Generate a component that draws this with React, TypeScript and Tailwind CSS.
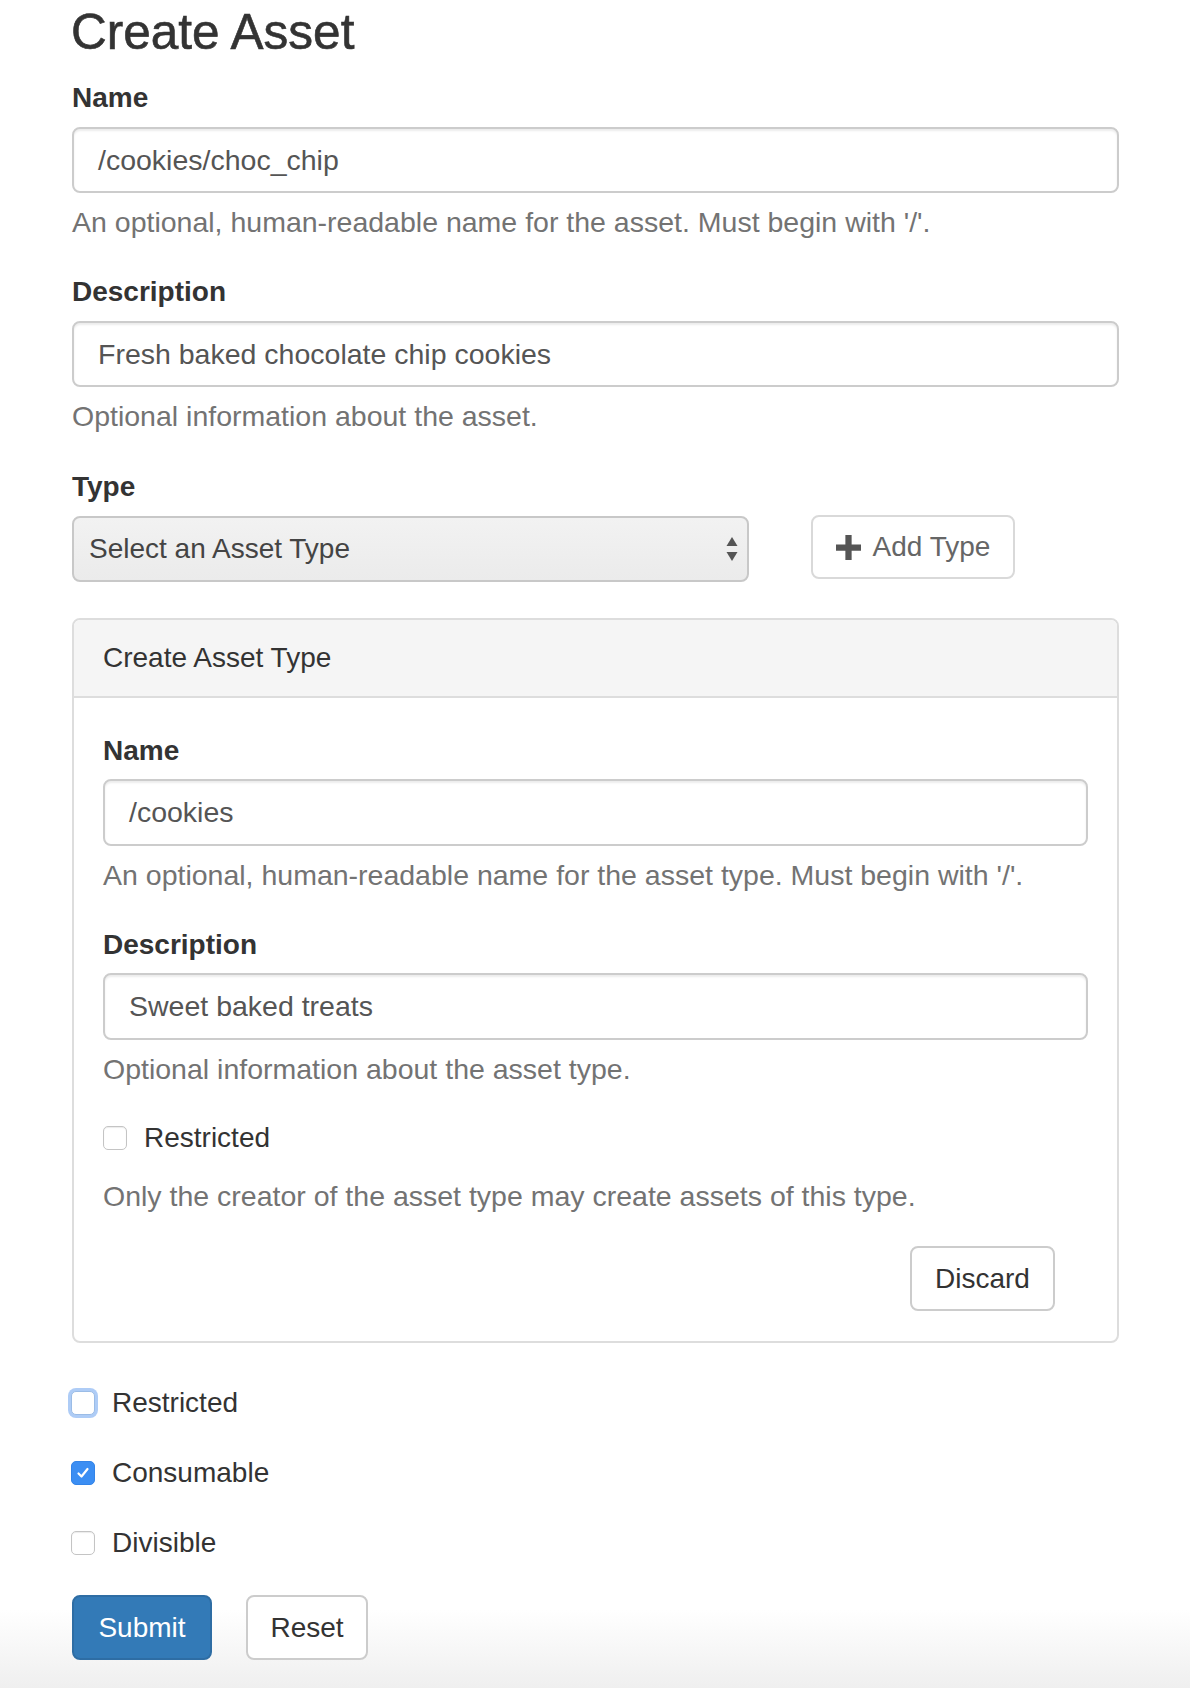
import React from "react";

const font = { fontFamily: '"Liberation Sans", Arial, Helvetica, sans-serif' };

function Label({ children }: { children: React.ReactNode }) {
  return <div className="text-[28px] leading-[40px] font-bold text-[#333]">{children}</div>;
}

function TextInput({ value, tall }: { value: string; tall?: boolean }) {
  return (
    <div
      className={
        (tall ? "h-[67px] " : "h-[66px] ") +
        "w-full rounded-[8px] border-2 border-[#cccccc] bg-white px-[24px] flex items-center text-[28.5px] text-[#555] shadow-[inset_0_2px_2px_rgba(0,0,0,0.075)]"
      }
    >
      {value}
    </div>
  );
}

function Help({ children }: { children: React.ReactNode }) {
  return <div className="mt-[9px] text-[28.5px] leading-[40px] text-[#737373]">{children}</div>;
}

function Checkbox({ checked, focus, label }: { checked?: boolean; focus?: boolean; label: string }) {
  return (
    <div className="flex items-center h-[40px]">
      <div
        className={
          "w-[24px] h-[24px] rounded-[5px] flex items-center justify-center shrink-0 " +
          (checked
            ? "bg-[#3b8ef3] border border-[#3384e8]"
            : focus
            ? "bg-white border border-[#9bbce6] shadow-[0_0_0_3px_rgba(120,170,240,0.6)]"
            : "bg-white border border-[#c4c4c4] shadow-[inset_0_1px_1px_rgba(0,0,0,0.08)]")
        }
      >
        {checked && (
          <svg width="16" height="16" viewBox="0 0 16 16">
            <path d="M3.5 8.5 L6.5 11.5 L12.5 4" fill="none" stroke="white" strokeWidth="2.2" strokeLinecap="round" strokeLinejoin="round" />
          </svg>
        )}
      </div>
      <span className="ml-[17px] text-[28px] text-[#333]">{label}</span>
    </div>
  );
}

export default function App() {
  return (
    <div
      style={font}
      className="min-h-[1688px] w-[1190px] bg-[linear-gradient(to_bottom,#ffffff_0px,#ffffff_1610px,#efefef_1688px)]"
    >
      <div className="pl-[72px] w-[1119px]">
        <h1 className="text-[49.5px] leading-[64px] text-[#333] font-normal m-0 -ml-px [-webkit-text-stroke:0.6px_#333]">
          Create Asset
        </h1>

        <div className="mt-[14px]">
          <Label>Name</Label>
          <div className="mt-[9px]">
            <TextInput value="/cookies/choc_chip" />
          </div>
          <Help>An optional, human-readable name for the asset. Must begin with '/'.</Help>
        </div>

        <div className="mt-[30px]">
          <Label>Description</Label>
          <div className="mt-[9px]">
            <TextInput value="Fresh baked chocolate chip cookies" />
          </div>
          <Help>Optional information about the asset.</Help>
        </div>

        <div className="mt-[31px]">
          <Label>Type</Label>
          <div className="mt-[9px] flex items-start">
            <div className="w-[677px] h-[66px] rounded-[8px] border-2 border-[#c8c8c8] bg-[linear-gradient(to_bottom,#f2f2f2,#ebebeb)] flex items-center justify-between pl-[15px] pr-[8px]">
              <span className="text-[28px] text-[#444]">Select an Asset Type</span>
              <svg width="14" height="26" viewBox="0 0 14 26">
                <path d="M7 1 L12.5 10 L1.5 10 Z" fill="#555" />
                <path d="M7 25 L12.5 16 L1.5 16 Z" fill="#555" />
              </svg>
            </div>
            <div className="ml-[62px] w-[204px] h-[64px] rounded-[8px] border-2 border-[#d9d9d9] bg-white flex items-center justify-center -mt-px">
              <svg width="25" height="25" viewBox="0 0 24 24" className="mr-[12px]">
                <path d="M9 0 H15 V9 H24 V15 H15 V24 H9 V15 H0 V9 H9 Z" fill="#555" />
              </svg>
              <span className="text-[28px] text-[#666]">Add Type</span>
            </div>
          </div>
        </div>

        <div className="mt-[36px] rounded-[8px] border-2 border-[#dddddd] bg-white">
          <div className="bg-[#f5f5f5] border-b-2 border-[#dddddd] rounded-t-[6px] h-[78px] flex items-center px-[29px]">
            <span className="text-[28px] text-[#333]">Create Asset Type</span>
          </div>
          <div className="px-[29px] pt-[33px] pb-[30px]">
            <Label>Name</Label>
            <div className="mt-[8px]">
              <TextInput tall value="/cookies" />
            </div>
            <Help>An optional, human-readable name for the asset type. Must begin with '/'.</Help>

            <div className="mt-[30px]">
              <Label>Description</Label>
              <div className="mt-[8px]">
                <TextInput tall value="Sweet baked treats" />
              </div>
              <Help>Optional information about the asset type.</Help>
            </div>

            <div className="mt-[29px]">
              <Checkbox label="Restricted" />
            </div>
            <div className="mt-[18px] text-[28.5px] leading-[40px] text-[#737373]">
              Only the creator of the asset type may create assets of this type.
            </div>

            <div className="mt-[30px] flex justify-end pr-[33px]">
              <div className="w-[145px] h-[65px] rounded-[8px] border-2 border-[#cccccc] bg-white flex items-center justify-center text-[28px] text-[#333]">
                Discard
              </div>
            </div>
          </div>
        </div>

        <div className="mt-[40px] -ml-px">
          <Checkbox focus label="Restricted" />
        </div>
        <div className="mt-[30px] -ml-px">
          <Checkbox checked label="Consumable" />
        </div>
        <div className="mt-[30px] -ml-px">
          <Checkbox label="Divisible" />
        </div>

        <div className="mt-[32px] flex">
          <div className="w-[140px] h-[65px] rounded-[8px] border-2 border-[#2e6da4] bg-[#337ab7] flex items-center justify-center text-[28px] text-white">
            Submit
          </div>
          <div className="ml-[34px] w-[122px] h-[65px] rounded-[8px] border-2 border-[#cccccc] bg-white flex items-center justify-center text-[28px] text-[#333]">
            Reset
          </div>
        </div>
      </div>
    </div>
  );
}
